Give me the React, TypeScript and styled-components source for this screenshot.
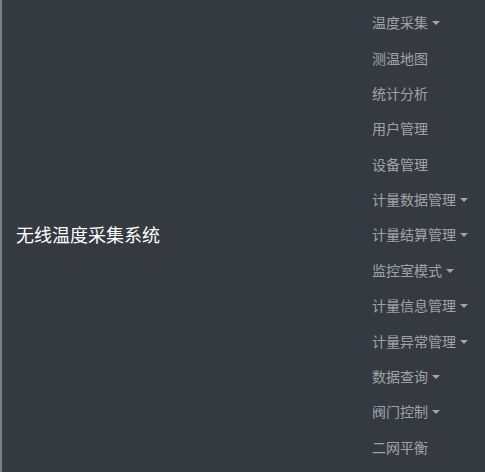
import React from 'react';
import styled, { createGlobalStyle } from 'styled-components';

const GlobalStyle = createGlobalStyle`
  html, body, #root {
    margin: 0;
    padding: 0;
    height: 100%;
  }
  body {
    background: #343a40;
    font-family: "Noto Sans CJK SC", "Noto Sans", sans-serif;
  }
`;

interface MenuItem {
  label: string,
  dropdown?: boolean,
}

const menu: Array<MenuItem> = [
  { label: '温度采集', dropdown: true },
  { label: '测温地图' },
  { label: '统计分析' },
  { label: '用户管理' },
  { label: '设备管理' },
  { label: '计量数据管理', dropdown: true },
  { label: '计量结算管理', dropdown: true },
  { label: '监控室模式', dropdown: true },
  { label: '计量信息管理', dropdown: true },
  { label: '计量异常管理', dropdown: true },
  { label: '数据查询', dropdown: true },
  { label: '阀门控制', dropdown: true },
  { label: '二网平衡' },
];

function App() {
  return (
    <>
      <GlobalStyle />
      <Navbar>
        <Brand>无线温度采集系统</Brand>
        <NavList>
          {menu.map((item, i) => (
            <NavItem key={i}>
              <NavLink $dropdown={item.dropdown}>{item.label}</NavLink>
            </NavItem>
          ))}
        </NavList>
      </Navbar>
    </>
  );
}

const Navbar = styled.nav`
  display: flex;
  flex-direction: row;
  align-items: center;
  box-sizing: border-box;
  min-height: 100vh;
  background: #343a40;
  border-left: 2px solid #7d7f82;
`;

const Brand = styled.div`
  margin-left: 14px;
  padding-bottom: 4px;
  font-size: 18px;
  line-height: 24px;
  color: #ffffff;
  white-space: nowrap;
`;

const NavList = styled.ul`
  list-style: none;
  margin: 0 0 0 auto;
  padding: 0;
  width: 113px;
  display: flex;
  flex-direction: column;
`;

const NavItem = styled.li`
  box-sizing: border-box;
  height: 35.4px;
  padding-bottom: 3px;
  display: flex;
  align-items: center;
`;

const NavLink = styled.a<{ $dropdown?: boolean }>`
  font-size: 14px;
  line-height: 20px;
  color: rgba(255, 255, 255, 0.55);
  white-space: nowrap;
  cursor: pointer;

  &::after {
    content: '';
    display: ${(p) => (p.$dropdown ? 'inline-block' : 'none')};
    margin-left: 4px;
    vertical-align: 3px;
    border-top: 4.5px solid rgba(255, 255, 255, 0.55);
    border-left: 4.5px solid transparent;
    border-right: 4.5px solid transparent;
  }
`;

export default App;
